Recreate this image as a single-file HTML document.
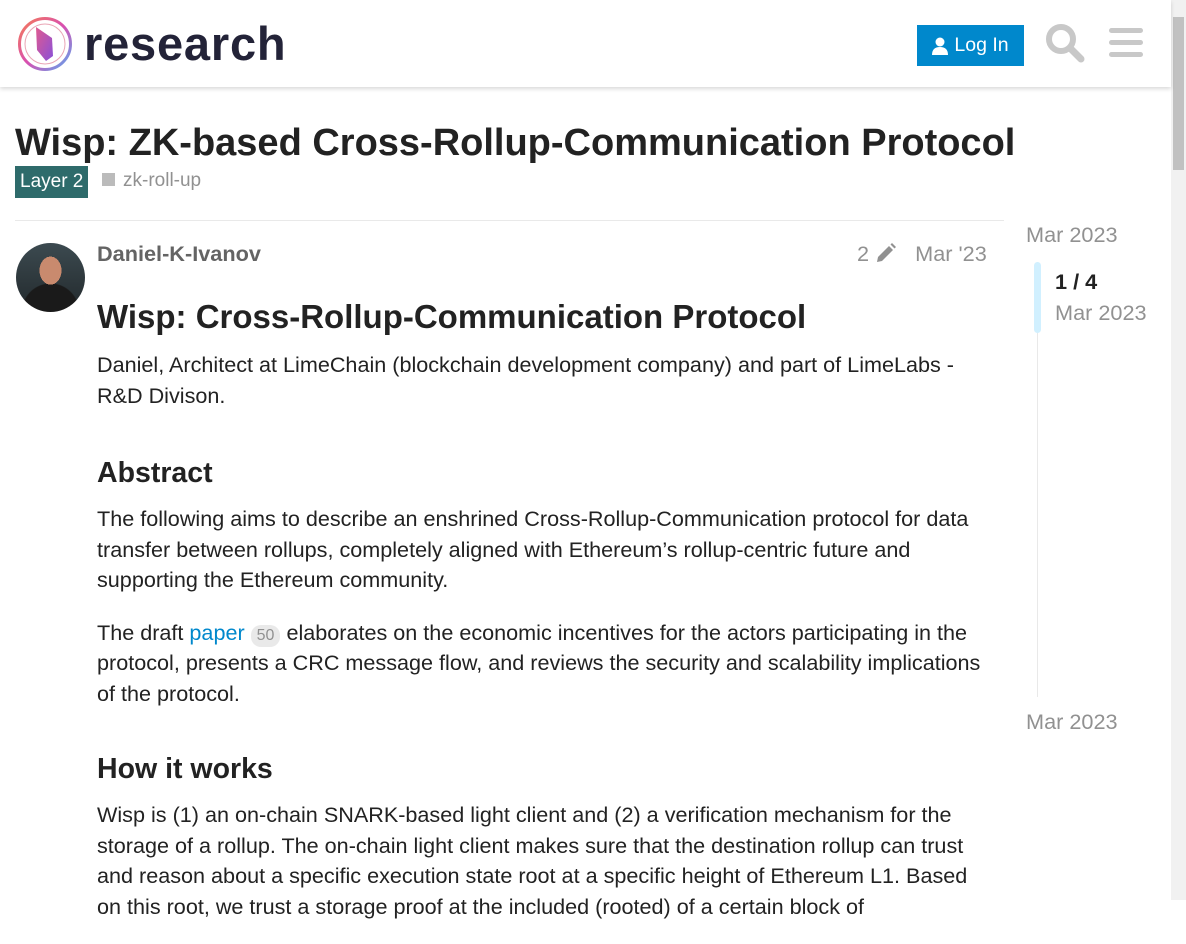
<!DOCTYPE html>
<html><head><meta charset="utf-8"><style>
*{box-sizing:border-box}
body{margin:0;width:1186px;height:900px;overflow:hidden;font-family:"Liberation Sans",sans-serif;color:#222;background:#fff;position:relative}
.hdr{position:absolute;left:0;top:0;width:1171px;height:87px;background:#fff;box-shadow:0 2px 4px rgba(0,0,0,.15);z-index:2}
.sb{position:absolute;right:0;top:0;width:15px;height:900px;background:#f1f1f1}
.sb .th{position:absolute;left:2px;top:17px;width:11px;height:153px;background:#c1c1c1}
.login{position:absolute;left:917px;top:25px;width:107px;height:41px;background:#0088cc;color:#fff;font-size:19.5px;display:flex;align-items:center;justify-content:center;gap:6px}
h1{position:absolute;left:15px;top:122px;margin:0;font-size:38px;font-weight:bold;line-height:42px;white-space:nowrap}
.tag{position:absolute;left:15px;top:166px;height:32px;background:#2e6b6b;color:#fff;font-size:19px;padding:0 5px;line-height:32px}
.tag2{position:absolute;left:102px;top:170px;font-size:19px;color:#919191;line-height:22px}
.tag2:before{content:"";display:inline-block;width:13px;height:13px;background:#bbb;margin-right:8px}
.hr{position:absolute;left:15px;top:220px;width:989px;height:1px;background:#e9e9e9}
.av{position:absolute;left:16px;top:243px;width:69px;height:69px;border-radius:50%;background:radial-gradient(ellipse 11px 14px at 50% 40%,#c98a6e 0 100%,transparent 100%),radial-gradient(circle at 50% 100%,#1a1a1a 0 28px,transparent 29px),linear-gradient(#3c4a50,#22292c)}
.name{position:absolute;left:97px;top:241px;font-size:21.7px;font-weight:bold;color:#646464}
.meta{position:absolute;left:857px;top:241px;font-size:21.7px;color:#919191;white-space:nowrap}
.post{position:absolute;left:97px;top:298px;width:900px;font-size:21.6px;line-height:30.5px}
.post h2{font-size:33px;margin:0 0 14px;line-height:38px}
.post h3{font-size:28.5px;margin:43px 0 14px;line-height:34px}
.post p{margin:0 0 22px}
a{color:#0088cc;text-decoration:none}
.cnt{display:inline-block;background:#e9e9e9;color:#919191;font-size:16px;border-radius:10px;padding:0 6px;line-height:22px}
.tl{position:absolute;left:1026px;font-size:21.7px;color:#919191}
</style></head><body>
<div class="hdr">
<svg style="position:absolute;left:17px;top:16px" width="56" height="56" viewBox="0 0 56 56"><defs><linearGradient id="g" x1="0" y1="0" x2="1" y2="1"><stop offset="0" stop-color="#f57c55"/><stop offset=".5" stop-color="#d94fb0"/><stop offset="1" stop-color="#5aa8f0"/></linearGradient><linearGradient id="g2" x1="0" y1="0" x2="1" y2="1"><stop offset="0" stop-color="#e05a90"/><stop offset="1" stop-color="#8a50d8"/></linearGradient></defs><circle cx="28" cy="28" r="25.5" fill="none" stroke="url(#g)" stroke-width="3"/><circle cx="28" cy="28" r="20" fill="none" stroke="#e9a5b5" stroke-width="1"/><path d="M19 11 L35 22 L36 40 L29 45 L20 34 Z" fill="url(#g2)"/></svg>
<div style="position:absolute;left:84px;top:16px;font-size:47px;font-weight:bold;color:#232338;letter-spacing:0.8px">research</div>
<div class="login"><svg width="16" height="18" viewBox="0 0 16 18"><circle cx="8" cy="5" r="4.5" fill="#fff"/><path d="M0 18 Q0 10 8 10 Q16 10 16 18Z" fill="#fff"/></svg>Log In</div>
<svg style="position:absolute;left:1045px;top:23px" width="40" height="40" viewBox="0 0 40 40"><circle cx="16" cy="16" r="12" fill="none" stroke="#c8c8c8" stroke-width="6"/><path d="M25 25 L36 36" stroke="#c8c8c8" stroke-width="7" stroke-linecap="round"/></svg>
<svg style="position:absolute;left:1109px;top:27px" width="34" height="32"><rect y="1" width="34" height="5" rx="2.5" fill="#c8c8c8"/><rect y="13" width="34" height="5" rx="2.5" fill="#c8c8c8"/><rect y="25" width="34" height="5" rx="2.5" fill="#c8c8c8"/></svg>
</div>
<div class="sb"><div class="th"></div></div>
<h1>Wisp: ZK-based Cross-Rollup-Communication Protocol</h1>
<div class="tag">Layer 2</div>
<div class="tag2">zk-roll-up</div>
<div class="hr"></div>
<div class="av"></div>
<div class="name">Daniel-K-Ivanov</div>
<div class="meta">2 <svg width="22" height="22" viewBox="0 0 22 22" style="vertical-align:-3px"><path d="M3 15 L14 4 L18 8 L7 19 L2 20 Z" fill="#919191"/><path d="M15.5 2.5 L17 1 L21 5 L19.5 6.5Z" fill="#919191"/></svg>&nbsp;&nbsp; Mar '23</div>
<div class="post">
<h2>Wisp: Cross-Rollup-Communication Protocol</h2>
<p>Daniel, Architect at LimeChain (blockchain development company) and part of LimeLabs - R&amp;D Divison.</p>
<h3 style="margin-top:45px">Abstract</h3>
<p>The following aims to describe an enshrined Cross-Rollup-Communication protocol for data transfer between rollups, completely aligned with Ethereum’s rollup-centric future and supporting the Ethereum community.</p>
<p>The draft <a>paper</a> <span class="cnt">50</span> elaborates on the economic incentives for the actors participating in the protocol, presents a CRC message flow, and reviews the security and scalability implications of the protocol.</p>
<h3>How it works</h3>
<p>Wisp is (1) an on-chain SNARK-based light client and (2) a verification mechanism for the storage of a rollup. The on-chain light client makes sure that the destination rollup can trust and reason about a specific execution state root at a specific height of Ethereum L1. Based on this root, we trust a storage proof at the included (rooted) of a certain block of</p>
</div>
<div class="tl" style="top:222px">Mar 2023</div>
<div style="position:absolute;left:1037px;top:262px;width:1px;height:435px;background:#e9e9e9"></div>
<div style="position:absolute;left:1034px;top:262px;width:7px;height:71px;border-radius:4px;background:#d1f0ff"></div>
<div style="position:absolute;left:1055px;top:269px;font-size:21.7px;font-weight:bold">1 / 4</div>
<div style="position:absolute;left:1055px;top:300px;font-size:21.7px;color:#919191">Mar 2023</div>
<div class="tl" style="top:709px">Mar 2023</div>
</body></html>
